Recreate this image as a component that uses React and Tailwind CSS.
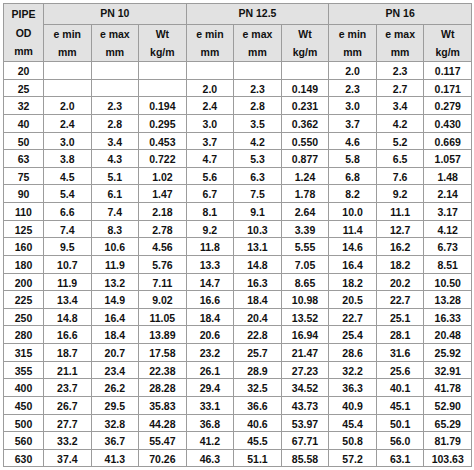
const groups = ["PN 10", "PN 12.5", "PN 16"];

const rows = [
    ["20", "", "", "", "", "", "", "2.0", "2.3", "0.117"],
    ["25", "", "", "", "2.0", "2.3", "0.149", "2.3", "2.7", "0.171"],
    ["32", "2.0", "2.3", "0.194", "2.4", "2.8", "0.231", "3.0", "3.4", "0.279"],
    ["40", "2.4", "2.8", "0.295", "3.0", "3.5", "0.362", "3.7", "4.2", "0.430"],
    ["50", "3.0", "3.4", "0.453", "3.7", "4.2", "0.550", "4.6", "5.2", "0.669"],
    ["63", "3.8", "4.3", "0.722", "4.7", "5.3", "0.877", "5.8", "6.5", "1.057"],
    ["75", "4.5", "5.1", "1.02", "5.6", "6.3", "1.24", "6.8", "7.6", "1.48"],
    ["90", "5.4", "6.1", "1.47", "6.7", "7.5", "1.78", "8.2", "9.2", "2.14"],
    ["110", "6.6", "7.4", "2.18", "8.1", "9.1", "2.64", "10.0", "11.1", "3.17"],
    ["125", "7.4", "8.3", "2.78", "9.2", "10.3", "3.39", "11.4", "12.7", "4.12"],
    ["160", "9.5", "10.6", "4.56", "11.8", "13.1", "5.55", "14.6", "16.2", "6.73"],
    ["180", "10.7", "11.9", "5.76", "13.3", "14.8", "7.05", "16.4", "18.2", "8.51"],
    ["200", "11.9", "13.2", "7.11", "14.7", "16.3", "8.65", "18.2", "20.2", "10.50"],
    ["225", "13.4", "14.9", "9.02", "16.6", "18.4", "10.98", "20.5", "22.7", "13.28"],
    ["250", "14.8", "16.4", "11.05", "18.4", "20.4", "13.52", "22.7", "25.1", "16.33"],
    ["280", "16.6", "18.4", "13.89", "20.6", "22.8", "16.94", "25.4", "28.1", "20.48"],
    ["315", "18.7", "20.7", "17.58", "23.2", "25.7", "21.47", "28.6", "31.6", "25.92"],
    ["355", "21.1", "23.4", "22.38", "26.1", "28.9", "27.23", "32.2", "25.6", "32.91"],
    ["400", "23.7", "26.2", "28.28", "29.4", "32.5", "34.52", "36.3", "40.1", "41.78"],
    ["450", "26.7", "29.5", "35.83", "33.1", "36.6", "43.73", "40.9", "45.1", "52.90"],
    ["500", "27.7", "32.8", "44.28", "36.8", "40.6", "53.97", "45.4", "50.1", "65.29"],
    ["560", "33.2", "36.7", "55.47", "41.2", "45.5", "67.71", "50.8", "56.0", "81.79"],
    ["630", "37.4", "41.3", "70.26", "46.3", "51.1", "85.58", "57.2", "63.1", "103.63"],
];

const subHeads = [
    ["e min", "mm"],
    ["e max", "mm"],
    ["Wt", "kg/m"],
];

const App = () => {
    return (
        <div className="bg-white w-[474px] h-[470px] pl-[3px] pt-[3px] font-['Liberation_Sans',Arial,sans-serif] text-[#111] font-bold text-[10.5px]">
            <table className="table-fixed border-collapse w-[469px] border border-[#8f8f8f]">
                <colgroup>
                    <col className="w-[40px]" />
                    {Array.from({ length: 9 }).map((_, i) => (
                        <col key={i} />
                    ))}
                </colgroup>
                <thead className="bg-[#e2e2e2]">
                    <tr className="h-[21px]">
                        <th rowSpan={2} className="border border-[#9c9c9c] align-middle font-bold leading-[18.5px] pt-[1px]">
                            PIPE<br />OD<br />mm
                        </th>
                        {groups.map((g) => (
                            <th key={g} colSpan={3} className="border border-[#9c9c9c] font-bold">
                                {g}
                            </th>
                        ))}
                    </tr>
                    <tr className="h-[37px]">
                        {groups.flatMap((g) =>
                            subHeads.map(([a, b]) => (
                                <th key={g + a} className="border border-[#9c9c9c] font-bold leading-[18px]">
                                    {a}<br />{b}
                                </th>
                            ))
                        )}
                    </tr>
                </thead>
                <tbody>
                    {rows.map((r) => (
                        <tr key={r[0]} className="h-[17.64px]">
                            {r.map((c, i) => (
                                <td key={i} className="border border-[#9c9c9c] text-center leading-none pt-[2px] p-0">
                                    {c}
                                </td>
                            ))}
                        </tr>
                    ))}
                </tbody>
            </table>
        </div>
    );
};

export default App;
